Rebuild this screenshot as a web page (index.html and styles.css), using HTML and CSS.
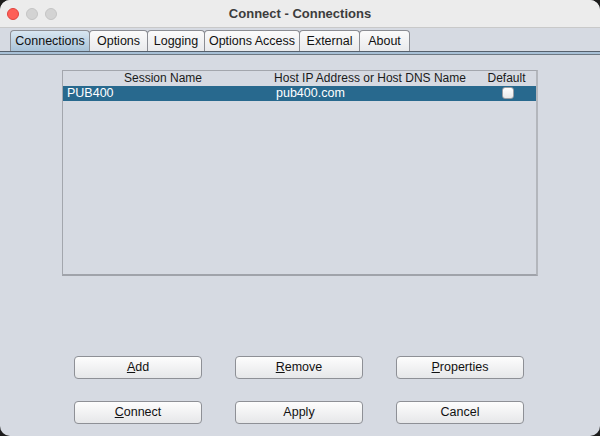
FILE: index.html
```html
<!DOCTYPE html>
<html>
<head>
<meta charset="utf-8">
<link rel="stylesheet" href="styles.css">
</head>
<body>
<div class="window">
  <div class="titlebar">
    <div class="lights">
      <span class="light red"></span>
      <span class="light gray"></span>
      <span class="light gray"></span>
    </div>
    <div class="title">Connect - Connections</div>
  </div>
  <div class="tabstrip">
    <div class="tab selected t1">Connections</div>
    <div class="tab t2">Options</div>
    <div class="tab t3">Logging</div>
    <div class="tab t4">Options Access</div>
    <div class="tab t5">External</div>
    <div class="tab t6">About</div>
  </div>
  <div class="tabline"></div>
  <div class="content">
    <div class="table">
      <div class="row head">
        <div class="c1">Session Name</div>
        <div class="c2">Host IP Address or Host DNS Name</div>
        <div class="c3">Default</div>
      </div>
      <div class="row sel">
        <div class="c1 left">PUB400</div>
        <div class="c2 left">pub400.com</div>
        <div class="c3"><span class="check"></span></div>
      </div>
    </div>
    <div class="buttons">
      <div class="btn"><u>A</u>dd</div>
      <div class="btn"><u>R</u>emove</div>
      <div class="btn"><u>P</u>roperties</div>
      <div class="btn"><u>C</u>onnect</div>
      <div class="btn">Apply</div>
      <div class="btn">Cancel</div>
    </div>
  </div>
</div>
</body>
</html>
```
FILE: styles.css
```css
html, body {
  margin: 0;
  padding: 0;
  background: #1c1c1c;
}
body {
  width: 600px;
  height: 436px;
  overflow: hidden;
  font-family: "Liberation Sans", Arial, sans-serif;
  font-size: 12px;
  color: #1a1a1a;
}
.window {
  width: 600px;
  height: 436px;
  background: #d6dae2;
  border-radius: 10px;
  overflow: hidden;
  display: flex;
  flex-direction: column;
}
.titlebar {
  height: 27px;
  background: #ececec;
  border-bottom: 1px solid #c9c9c9;
  display: flex;
  align-items: center;
  position: relative;
  flex: none;
}
.lights {
  display: flex;
  gap: 7px;
  padding-left: 7px;
}
.light {
  width: 12px;
  height: 12px;
  border-radius: 50%;
  box-sizing: border-box;
}
.light.red {
  background: #fe5f57;
  border: 1px solid #e0443e;
}
.light.gray {
  background: #d3d3d3;
  border: 1px solid #c4c4c4;
}
.title {
  position: absolute;
  left: 0;
  right: 0;
  top: 0;
  height: 27px;
  line-height: 27px;
  text-align: center;
  font-weight: bold;
  font-size: 13px;
  color: #3c3c3c;
  pointer-events: none;
}
.tabstrip {
  flex: none;
  height: 22px;
  padding: 1px 0 0 10px;
  display: flex;
  align-items: flex-end;
}
.tab {
  height: 21px;
  line-height: 21px;
  box-sizing: border-box;
  border: 1px solid #8b8d93;
  border-bottom: none;
  border-radius: 4px 4px 0 0;
  background: linear-gradient(#fbfbfb, #e9eaec);
  text-align: center;
  font-size: 12.5px;
  color: #111;
  margin-right: -1px;
}
.tab.selected {
  background: linear-gradient(#d8e6f1, #a9c3d8);
}
.t1 { width: 80px; }
.t2 { width: 59px; }
.t3 { width: 58px; }
.t4 { width: 96px; }
.t5 { width: 61px; }
.t6 { width: 51px; }
.tabline {
  flex: none;
  height: 2px;
  border-top: 1px solid #56606c;
  border-bottom: 1px solid #6e7882;
  background: #a8c0d6;
}
.content {
  flex: 1;
  display: flex;
  flex-direction: column;
  padding: 15px 62px 0 62px;
}
.table {
  height: 206px;
  box-sizing: border-box;
  border: 1px solid #a3a6ad;
  border-bottom: 2px solid #a0a3aa;
  border-right: 2px solid #b3b6bc;
}
.row {
  display: flex;
  height: 15px;
  line-height: 15px;
  font-size: 12.5px;
}
.row.head {
  height: 15px;
  line-height: 15px;
  font-size: 12px;
  color: #1a1a1a;
}
.row.sel {
  background: #28698e;
  color: #fff;
}
.c1 { width: 200px; text-align: center; }
.c2 { width: 214px; text-align: center; }
.c3 { flex: 1; text-align: center; }
.left { text-align: left; padding-left: 4px; box-sizing: border-box; }
.c2.left { padding-left: 13px; }
.check {
  display: inline-block;
  width: 12px;
  height: 12px;
  box-sizing: border-box;
  border: 1px solid #9a9ea5;
  border-radius: 3px;
  background: linear-gradient(#ffffff, #e9e9e9);
  vertical-align: -2px;
  margin-left: 3px;
}
.buttons {
  margin-top: 80px;
  padding: 0 12px;
  display: grid;
  grid-template-columns: repeat(3, 128px);
  column-gap: 33px;
  row-gap: 22px;
}
.btn {
  height: 23px;
  line-height: 21px;
  box-sizing: border-box;
  border: 1px solid #8e9096;
  border-radius: 4px;
  background: linear-gradient(#fdfdfd, #e6e7e9);
  text-align: center;
  font-size: 12.5px;
  color: #111;
}
```
